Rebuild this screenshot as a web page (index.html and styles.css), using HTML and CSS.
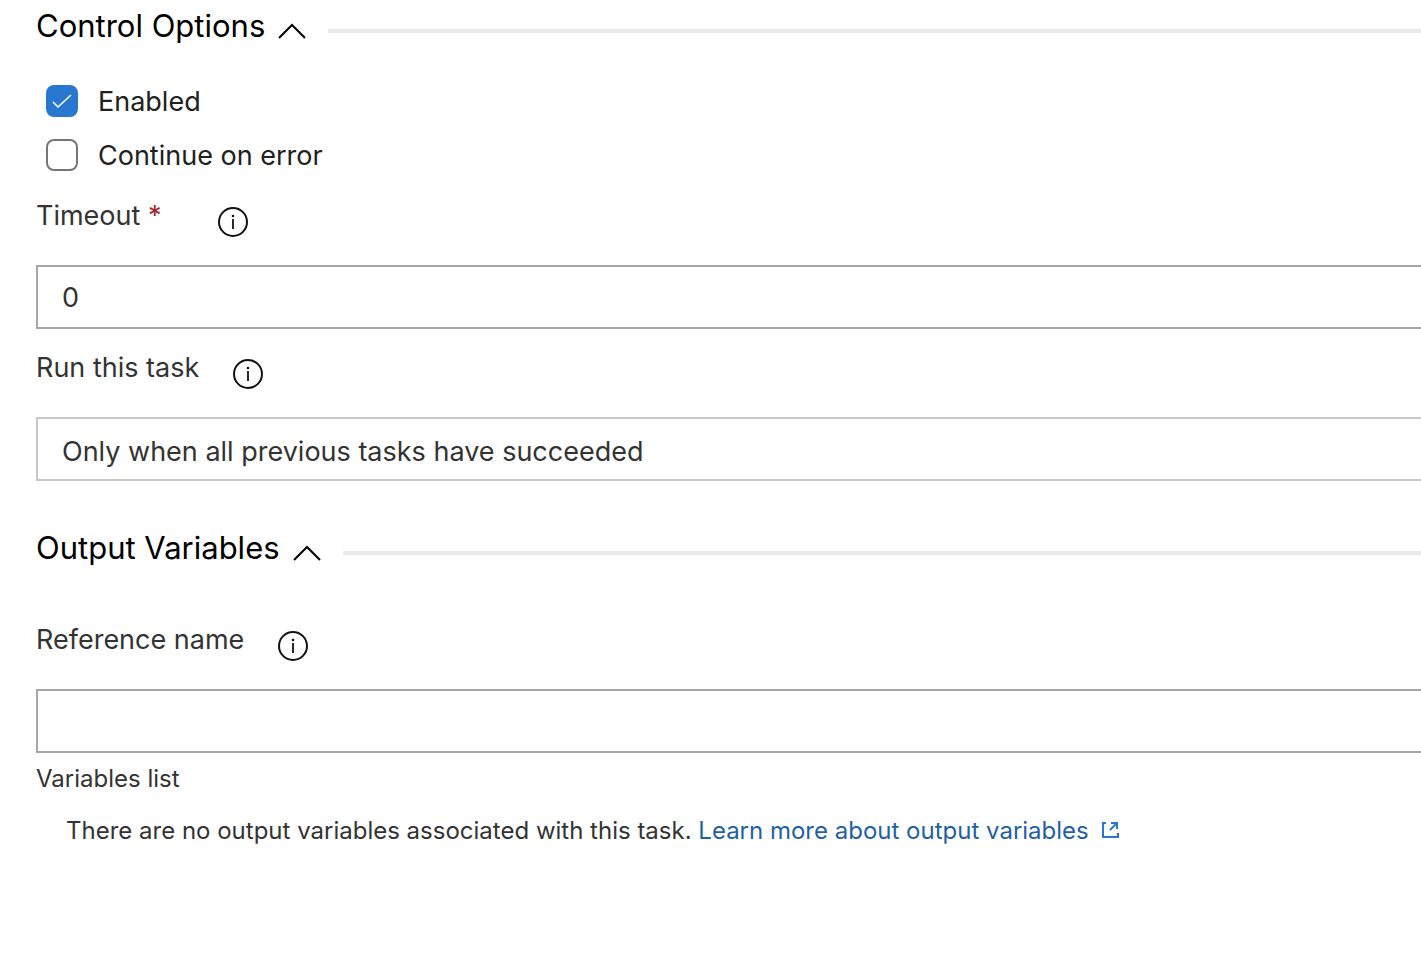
FILE: index.html
```html
<!DOCTYPE html>
<html lang="en">
<head>
<meta charset="utf-8">
<title>Task options</title>
<link rel="stylesheet" href="styles.css">
</head>
<body>
<main class="panel">
  <section class="section">
    <h2 class="heading"><button type="button" class="toggle" aria-expanded="true">Control Options<svg class="chevron" viewBox="0 0 28 16" aria-hidden="true"><path d="M1 15 14 2 27 15"/></svg></button></h2>
    <div class="checks">
      <label class="check"><input type="checkbox" class="box" checked><span class="check-text">Enabled</span></label>
      <label class="check"><input type="checkbox" class="box"><span class="check-text">Continue on error</span></label>
    </div>
    <div class="field">
      <div class="label-row label-row-required">
        <label for="timeout">Timeout <span class="required">*</span></label>
        <button type="button" class="info" aria-label="About timeout"><svg viewBox="0 0 32 32"><circle cx="16" cy="16" r="14"/><path class="stem" d="M16 13v10"/><circle class="dot" cx="16" cy="10" r="1.3"/></svg></button>
      </div>
      <input id="timeout" class="control" type="text" value="0">
    </div>
    <div class="field">
      <div class="label-row">
        <label for="run">Run this task</label>
        <button type="button" class="info" aria-label="About run this task"><svg viewBox="0 0 32 32"><circle cx="16" cy="16" r="14"/><path class="stem" d="M16 13v10"/><circle class="dot" cx="16" cy="10" r="1.3"/></svg></button>
      </div>
      <select id="run" class="control control-select"><option>Only when all previous tasks have succeeded</option></select>
    </div>
  </section>
  <section class="section section-output">
    <h2 class="heading"><button type="button" class="toggle" aria-expanded="true">Output Variables<svg class="chevron" viewBox="0 0 28 16" aria-hidden="true"><path d="M1 15 14 2 27 15"/></svg></button></h2>
    <div class="field field-reference">
      <div class="label-row">
        <label for="reference">Reference name</label>
        <button type="button" class="info" aria-label="About reference name"><svg viewBox="0 0 32 32"><circle cx="16" cy="16" r="14"/><path class="stem" d="M16 13v10"/><circle class="dot" cx="16" cy="10" r="1.3"/></svg></button>
      </div>
      <input id="reference" class="control" type="text">
    </div>
    <h3 class="list-title">Variables list</h3>
    <p class="note">There are no output variables associated with this task. <a href="#">Learn more about output variables<svg class="external" viewBox="0 0 18 18" aria-hidden="true"><path d="M5 2H2v14h15v-4M10 2h6v6M16 2 9 9"/></svg></a></p>
  </section>
</main>
</body>
</html>
```
FILE: styles.css
```css
* { box-sizing: border-box; }
body {
  margin: 0;
  background: #fff;
  color: #333;
  font: 27px/38px Inter, sans-serif;
  overflow-x: hidden;
}
.panel { padding-left: 36px; }
button { padding: 0; border: 0; background: none; color: inherit; font: inherit; }
svg { fill: none; stroke: currentColor; stroke-width: 2; }
.section { padding-top: 6px; }
.section-output { padding-top: 47px; }
.heading {
  display: flex;
  align-items: center;
  gap: 22px;
  margin: 0;
  color: #000;
  font-size: 31px;
  font-weight: 400;
  line-height: 40px;
}
.heading::after {
  content: "";
  flex: 1;
  height: 4px;
  margin-top: 10px;
  background: #eaeaea;
}
.toggle { display: flex; align-items: center; gap: 13px; }
.chevron { width: 28px; height: 16px; margin-top: 10px; }
.checks {
  display: grid;
  justify-items: start;
  gap: 14px;
  padding: 35px 0 0 10px;
  color: #212121;
}
.check { display: flex; align-items: center; gap: 20px; }
.check-text { padding-top: 2px; }
.box {
  appearance: none;
  width: 32px;
  height: 32px;
  margin: 0;
  border: 2px solid #767676;
  border-radius: 8px;
}
.box:checked {
  border-color: #2878d0;
  background: #2878d0 url("data:image/svg+xml,%3Csvg xmlns='http://www.w3.org/2000/svg' viewBox='0 0 28 28'%3E%3Cpath d='M5 15l5 5L23 8' fill='none' stroke='white' stroke-width='1.5'/%3E%3C/svg%3E") center / 28px;
}
.field { padding-top: 20px; }
.checks + .field { padding-top: 22px; }
.field-reference { padding-top: 53px; }
.label-row { display: flex; align-items: flex-start; gap: 33px; height: 68px; }
.label-row-required { gap: 56px; }
.required { color: #a4262c; }
.info { width: 32px; height: 32px; margin-top: 9px; color: #111; }
.info svg { display: block; }
.stem { stroke-width: 1.8; }
.dot { fill: currentColor; stroke: none; }
.control {
  display: block;
  appearance: none;
  width: 100%;
  height: 64px;
  padding: 0 24px;
  border: 2px solid #a6a6a6;
  border-right: 0;
  border-radius: 0;
  background: #fff;
  color: #333;
  font: inherit;
}
.control-select { padding-top: 6px; border-color: #c8c8c8; }
.list-title { margin: 0; padding-top: 10px; font-size: 24px; font-weight: 400; line-height: 32px; }
.note { margin: 0; padding: 20px 0 0 30px; font-size: 24px; line-height: 32px; }
.note a { color: #1f5fa6; text-decoration: none; }
.external { width: 18px; height: 18px; margin-left: 12px; color: #2878d0; }
```
